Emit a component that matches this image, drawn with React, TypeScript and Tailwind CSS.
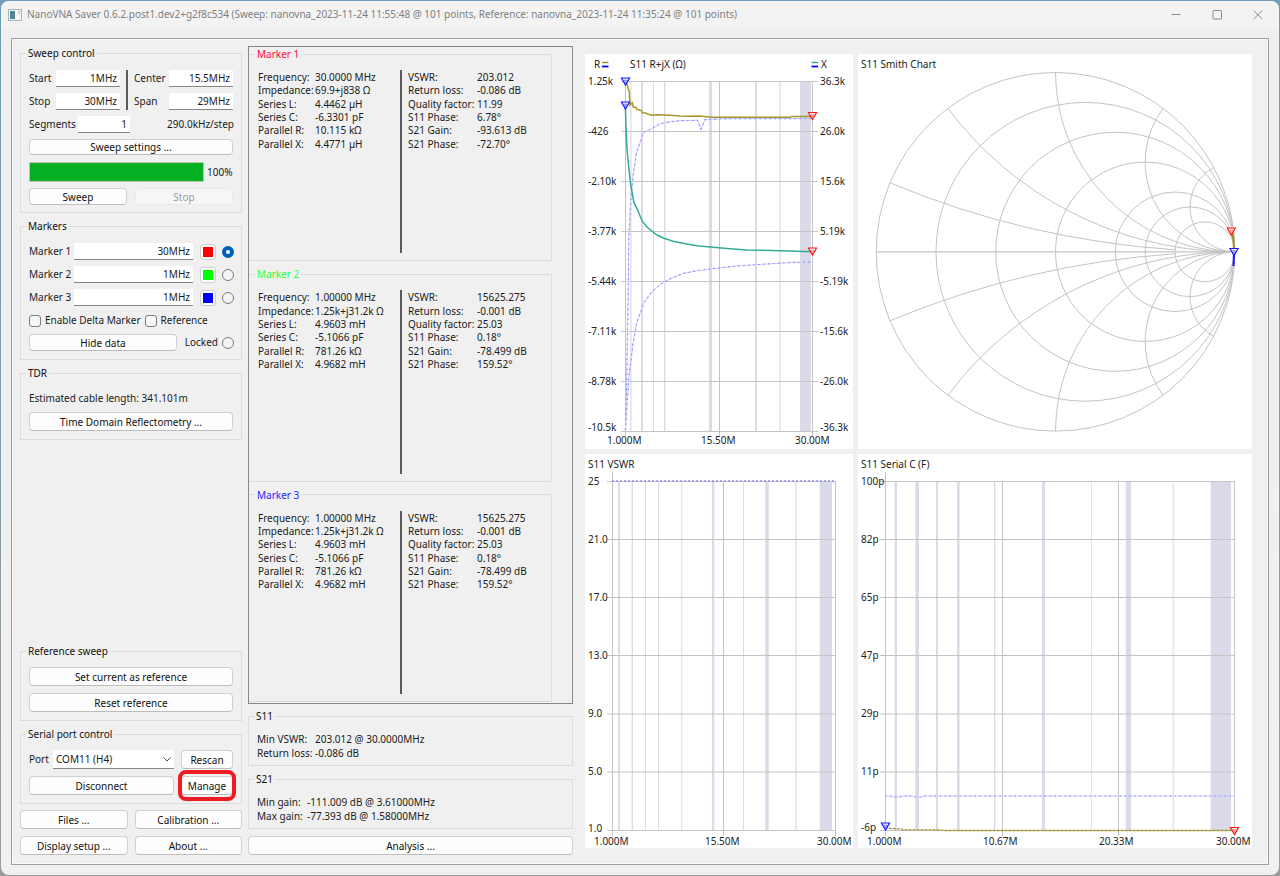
import React from "react";

type Band = [number, number];
type Pt = [number, number];

const GRID = "#c4c4c4";
const BAND = "#dadae8";

const btn =
  "flex items-center justify-center rounded-[4px] border border-[#d0d0d0] border-b-[#bdbdbd] bg-[#fdfdfd] leading-none text-[#111] whitespace-nowrap";
const field =
  "h-[17px] min-w-0 border-b border-[#868686] bg-white px-[3px] text-right text-[#1b1b1b] outline-none";

function Group({
  title,
  className = "",
  legendClass = "-ml-[3px] text-[#111]",
  children,
}: {
  title: string;
  className?: string;
  legendClass?: string;
  children: React.ReactNode;
}) {
  return (
    <fieldset className={`min-w-0 border border-[#dcdcdc] ${className}`}>
      <legend className={`h-[14px] px-[2px] leading-[14px] ${legendClass}`}>{title}</legend>
      {children}
    </fieldset>
  );
}

function LabeledField({
  label,
  value,
  labelClass,
  inputClass,
}: {
  label: string;
  value: string;
  labelClass: string;
  inputClass: string;
}) {
  const id = `f-${label.replace(/\s/g, "-").toLowerCase()}`;
  return (
    <>
      <label htmlFor={id} className={`shrink-0 ${labelClass}`}>
        {label}
      </label>
      <input id={id} defaultValue={value} className={`${field} ${inputClass}`} />
    </>
  );
}

function Radio({ label, checked = false }: { label: string; checked?: boolean }) {
  return (
    <input
      type="radio"
      name="active-marker"
      aria-label={label}
      defaultChecked={checked}
      className="size-3 shrink-0 appearance-none rounded-full border border-[#7d7d7d] bg-[#f4f4f4] checked:border-4 checked:border-[#005fb8] checked:bg-white"
    />
  );
}

function Check({ label }: { label: string }) {
  return (
    <label className="flex items-center gap-1">
      <input
        type="checkbox"
        className="size-3 shrink-0 appearance-none rounded-[3px] border border-[#7d7d7d] bg-[#f6f6f6]"
      />
      {label}
    </label>
  );
}

function MarkerRow({ name, value, swatch, checked }: { name: string; value: string; swatch: string; checked?: boolean }) {
  return (
    <div className="flex items-center">
      <LabeledField label={name} value={value} labelClass="w-[45px] whitespace-nowrap" inputClass="flex-1" />
      <button
        type="button"
        aria-label={`${name} colour`}
        className="ml-[7px] flex h-4 w-4 items-center justify-center rounded-[3px] border border-[#cfcfcf] bg-[#fdfdfd]"
      >
        <span className={`size-[10px] ${swatch}`} />
      </button>
      <span className="ml-1.5 -mr-px flex">
        <Radio label={name} checked={checked} />
      </span>
    </div>
  );
}

type DataRow = [string, string];

function DataTable({ rows, labelWidth }: { rows: DataRow[]; labelWidth: string }) {
  return (
    <table className="h-20 border-collapse">
      <tbody>
        {rows.map(([k, v]) => (
          <tr key={k}>
            <th scope="row" className={`p-0 text-left font-normal leading-[13px] whitespace-nowrap ${labelWidth}`}>
              {k}
            </th>
            <td className="p-0 leading-[13px] whitespace-nowrap">{v}</td>
          </tr>
        ))}
      </tbody>
    </table>
  );
}

function MarkerData({ title, color, left, right }: { title: string; color: string; left: DataRow[]; right: DataRow[] }) {
  return (
    <Group title={title} legendClass={`ml-[6px] ${color}`} className="mr-5 flex-1 border-l-0">
      <div className="flex h-full pt-[9px] pb-[7px] pl-[9px]">
        <div className="w-[142px] pt-px">
          <DataTable rows={left} labelWidth="w-[57px] min-w-[57px]" />
        </div>
        <div className="mr-[6px] w-[2px] bg-[#5a5a5a]" />
        <div className="pt-px">
          <DataTable rows={right} labelWidth="w-[69px] min-w-[69px]" />
        </div>
      </div>
    </Group>
  );
}

const marker1L: DataRow[] = [
  ["Frequency:", "30.0000 MHz"],
  ["Impedance:", "69.9+j838 Ω"],
  ["Series L:", "4.4462 µH"],
  ["Series C:", "-6.3301 pF"],
  ["Parallel R:", "10.115 kΩ"],
  ["Parallel X:", "4.4771 µH"],
];
const marker1R: DataRow[] = [
  ["VSWR:", "203.012"],
  ["Return loss:", "-0.086 dB"],
  ["Quality factor:", "11.99"],
  ["S11 Phase:", "6.78°"],
  ["S21 Gain:", "-93.613 dB"],
  ["S21 Phase:", "-72.70°"],
];
const marker2L: DataRow[] = [
  ["Frequency:", "1.00000 MHz"],
  ["Impedance:", "1.25k+j31.2k Ω"],
  ["Series L:", "4.9603 mH"],
  ["Series C:", "-5.1066 pF"],
  ["Parallel R:", "781.26 kΩ"],
  ["Parallel X:", "4.9682 mH"],
];
const marker2R: DataRow[] = [
  ["VSWR:", "15625.275"],
  ["Return loss:", "-0.001 dB"],
  ["Quality factor:", "25.03"],
  ["S11 Phase:", "0.18°"],
  ["S21 Gain:", "-78.499 dB"],
  ["S21 Phase:", "159.52°"],
];

/* ---------- charts ---------- */

function ChartFrame({ viewBox, label, children }: { viewBox: string; label: string; children: React.ReactNode }) {
  return (
    <div className="min-h-0 min-w-0 bg-white">
      <svg role="img" aria-label={label} viewBox={viewBox} className="block h-full w-full" fontSize="10" fill="#222">
        {children}
      </svg>
    </div>
  );
}

function Pin({ x, y, color }: { x: number; y: number; color: string }) {
  return (
    <g fill="none" stroke={color}>
      <path d={`M${x - 4} ${y - 7}h8l-4 7z`} fill="#fff" strokeWidth="1.2" />
      <path d={`M${x - 1.4} ${y - 4.9}h2.8l-1.4 2.6z`} strokeWidth="0.7" opacity="0.7" />
    </g>
  );
}

function Bands({ bands, top, bottom }: { bands: Band[]; top: number; bottom: number }) {
  return (
    <g fill={BAND}>
      {bands.map(([a, b]) => (
        <rect key={a} x={a} y={top} width={b - a} height={bottom - top} />
      ))}
    </g>
  );
}

const pts = (p: Pt[]) => p.map((q) => q.join(",")).join(" ");

const gold: Pt[] = [
  [625.5, 81], [627, 84], [629.3, 92], [630, 105], [632.3, 102.7], [633.3, 107], [636, 107.5], [637, 109.5], [641.3, 110.3],
  [642.3, 112.7], [646, 113], [648, 114.3], [652, 115.3], [657, 114.7], [670, 115.3], [680, 116], [690, 116.3], [699, 116],
  [712, 117.2], [790, 117.2], [792, 116.4], [812.5, 116.4],
];
const teal: Pt[] = [
  [625.3, 105], [626, 127], [627, 149], [629, 170], [630.7, 185], [634, 202.7], [637.3, 209.3], [642, 220.7], [646.5, 226.5],
  [651.7, 231], [657, 235], [664, 238.3], [673, 241.3], [686.7, 244], [697, 245.8], [710, 247], [730, 248.7], [746.7, 250],
  [780, 250.7], [812.7, 251.7],
];
const refUpper: Pt[] = [
  [625.5, 430], [626.7, 381], [628.3, 287], [628.7, 239], [631, 197], [633.3, 174], [636.7, 152], [641, 140], [643.3, 132.7],
  [651.7, 128.7], [660, 123.7], [670, 121.8], [680, 120.7], [697.3, 120.3], [701, 129.3], [705, 119.7], [720, 118.8], [812.7, 118.5],
];
const refLower: Pt[] = [
  [625.3, 430], [627, 405], [629.3, 373], [633.3, 341.7], [636.7, 323], [641, 310.7], [644, 302.3], [651.7, 292.3],
  [660, 284.3], [673.3, 277.3], [684, 273.3], [696.7, 270.7], [710, 269], [736.7, 266], [766.7, 264], [793, 262.4], [812.7, 262],
];

function RefTrace({ p }: { p: Pt[] }) {
  return (
    <g fill="none">
      <polyline points={pts(p)} stroke="#ccccff" strokeWidth="1" />
      <polyline points={pts(p)} stroke="#8c8cff" strokeWidth="1.2" strokeDasharray="1.5 3.5" />
    </g>
  );
}

function ImpedanceChart() {
  const rows = [81.5, 131.5, 181.5, 231.5, 281.5, 331.5, 381.5, 431.5];
  const left = ["1.25k", "-426", "-2.10k", "-3.77k", "-5.44k", "-7.11k", "-8.78k", "-10.5k"];
  const right = ["36.3k", "26.0k", "15.6k", "5.19k", "-5.19k", "-15.6k", "-26.0k", "-36.3k"];
  return (
    <ChartFrame viewBox="585 54 268 395" label="S11 R+jX">
      <Bands
        top={81}
        bottom={431}
        bands={[[630.3, 631.5], [641, 643], [653, 654], [664, 665.4], [709, 712], [755, 757], [779.3, 780.5], [800, 811]]}
      />
      <g stroke={GRID}>
        {rows.map((y) => (
          <line key={y} x1="621" x2="818" y1={y} y2={y} />
        ))}
        {[625.5, 719.5, 812.5].map((x) => (
          <line key={x} x1={x} x2={x} y1="81" y2="436" />
        ))}
      </g>
      <text x="594" y="68">R</text>
      <path d="M602 62.500h6.500" stroke="#9d8a1c" strokeWidth="1.4" />
      <path d="M602 66.500h6.500" stroke="#00f" strokeWidth="1.8" />
      <text x="630" y="68">S11 R+jX (Ω)</text>
      <path d="M811.500 62.500h6.500" stroke="#2ca28c" strokeWidth="1.4" />
      <path d="M811.500 66.500h6.500" stroke="#00f" strokeWidth="1.8" />
      <text x="821" y="68">X</text>
      {left.map((t, i) => (
        <text key={t} x="588" y={i === 7 ? 431 : 85 + i * 50}>{t}</text>
      ))}
      {right.map((t, i) => (
        <text key={t} x="820" y={i === 7 ? 431 : 85 + i * 50}>{t}</text>
      ))}
      <text x="607" y="444">1.000M</text>
      <text x="701" y="444">15.50M</text>
      <text x="795" y="444">30.00M</text>
      <RefTrace p={refUpper} />
      <RefTrace p={refLower} />
      <polyline points={pts(gold)} fill="none" stroke="#a8942c" strokeWidth="1.5" />
      <polyline points={pts(teal)} fill="none" stroke="#33aa94" strokeWidth="1.5" />
      <Pin x={625.5} y={85} color="#1414ff" />
      <Pin x={625.5} y={109} color="#1414ff" />
      <Pin x={812.5} y={119.5} color="#ff1414" />
      <Pin x={812.5} y={255} color="#ff1414" />
    </ChartFrame>
  );
}

const SMITH = { cx: 1055.5, cy: 251.8, r: 179.3 };

function smithPoint(re: number, im: number): Pt {
  const d = (re + 1) ** 2 + im ** 2;
  const gx = (re * re - 1 + im * im) / d;
  const gy = (2 * im) / d;
  return [SMITH.cx + SMITH.r * gx, SMITH.cy - SMITH.r * gy];
}

function SmithChart() {
  const { cx, cy, r } = SMITH;
  const circles = [1, 5 / 6, 2 / 3, 1 / 2, 1 / 3, 1 / 4, 1 / 6];
  const arcs: Pt[] = [[0.2, 5], [0.5, 30], [1, 60], [2, 60], [4, 80]];
  return (
    <ChartFrame viewBox="858 54 394 395" label="S11 Smith Chart">
      <g fill="none" stroke={GRID}>
        {circles.map((k) => (
          <circle key={k} cx={cx + r * (1 - k)} cy={cy} r={r * k} />
        ))}
        <line x1={cx - r} x2={cx + r} y1={cy} y2={cy} strokeWidth="1.2" />
        {arcs.map(([x, end]) =>
          [1, -1].map((s) => (
            <path
              key={`${x}${s}`}
              d={`M${smithPoint(0, s * x).join(" ")}A${r / x} ${r / x} 0 0 ${s > 0 ? 0 : 1} ${smithPoint(end, s * x).join(" ")}`}
            />
          )),
        )}
      </g>
      <text x="861" y="68">S11 Smith Chart</text>
      <path d="M1232 231l1.500 9l.5 11" fill="none" stroke="#a08c1e" strokeWidth="2" />
      <path d="M1234 252l-.5 14" fill="none" stroke="#1414ff" strokeWidth="2" />
      <Pin x={1231.3} y={235} color="#ff1414" />
      <Pin x={1234} y={255.5} color="#1414ff" />
    </ChartFrame>
  );
}

const lowerRows = [481.5, 539.5, 597.5, 655.5, 714, 772, 830.5];

function VswrChart() {
  const labels = ["25", "21.0", "17.0", "13.0", "9.0", "5.0", "1.0"];
  return (
    <ChartFrame viewBox="585 454 268 394" label="S11 VSWR">
      <Bands
        top={481}
        bottom={830}
        bands={[[618, 620], [631.6, 633], [645, 646], [658, 659], [681.3, 682.3], [712, 714.4], [743, 744], [765.3, 768.7], [795.4, 796.6], [819.7, 832]]}
      />
      <g stroke={GRID}>
        {lowerRows.map((y) => (
          <line key={y} x1="607" x2="836" y1={y} y2={y} />
        ))}
        <line x1="612.5" x2="612.5" y1="472" y2="836" />
        <line x1="723.5" x2="723.5" y1="481" y2="836" />
        <line x1="835.5" x2="835.5" y1="481" y2="836" />
        <line x1="612" x2="836" y1="481" y2="481" stroke="#8c8cff" strokeWidth="1.6" strokeDasharray="2 2" />
      </g>
      <text x="588" y="468">S11 VSWR</text>
      {labels.map((t, i) => (
        <text key={t} x="588" y={i === 6 ? 832 : 485 + i * 58}>{t}</text>
      ))}
      <text x="594" y="845">1.000M</text>
      <text x="705" y="845">15.50M</text>
      <text x="817" y="845">30.00M</text>
    </ChartFrame>
  );
}

function SerialCChart() {
  const labels = ["100p", "82p", "65p", "47p", "29p", "11p", "-6p"];
  const ref: Pt[] = [[885, 796], [890, 796], [894, 797], [899, 797], [903, 796], [912, 796], [916, 797], [921, 797], [925, 796], [1235, 796]];
  return (
    <ChartFrame viewBox="858 454 394 394" label="S11 Serial C">
      <Bands
        top={481}
        bottom={830}
        bands={[[894.7, 897], [915.4, 919], [936, 938], [957, 959.6], [994, 995.3], [1042, 1045], [1091.3, 1092], [1125.7, 1131], [1172.7, 1173.7], [1210.6, 1231]]}
      />
      <g stroke={GRID}>
        {lowerRows.map((y) => (
          <line key={y} x1="880" x2="1235" y1={y} y2={y} />
        ))}
        <line x1="885.5" x2="885.5" y1="472" y2="836" />
        <line x1="1002.5" x2="1002.5" y1="481" y2="836" />
        <line x1="1118.5" x2="1118.5" y1="481" y2="836" />
        <line x1="1234.5" x2="1234.5" y1="481" y2="836" />
      </g>
      <text x="861" y="468">S11 Serial C (F)</text>
      {labels.map((t, i) => (
        <text key={t} x="861" y={i === 6 ? 831 : 485 + i * 58}>{t}</text>
      ))}
      <text x="867" y="845">1.000M</text>
      <text x="983" y="845">10.67M</text>
      <text x="1099" y="845">20.33M</text>
      <text x="1216" y="845">30.00M</text>
      <RefTrace p={ref} />
      <polyline
        points="885,827 890,828.5 901,829 903,829.8 940,830 945,830.5 1235,830.5"
        fill="none"
        stroke="#a8942c"
        strokeWidth="1.3"
        strokeDasharray="3 1"
      />
      <Pin x={885.5} y={830} color="#1414ff" />
      <Pin x={1234.5} y={834.5} color="#ff1414" />
    </ChartFrame>
  );
}

/* ---------- panels ---------- */

function ControlColumn() {
  return (
    <div className="flex w-[222px] shrink-0 flex-col">
      <Group title="Sweep control" className="px-2 pb-[7px]">
        <div className="mt-[10px] flex gap-[6px]">
          <div className="flex w-[91px] flex-col gap-1.5">
            <div className="flex items-center">
              <LabeledField label="Start" value="1MHz" labelClass="w-[27px]" inputClass="flex-1" />
            </div>
            <div className="flex items-center">
              <LabeledField label="Stop" value="30MHz" labelClass="w-[27px]" inputClass="flex-1" />
            </div>
          </div>
          <div className="w-[2px] bg-[#5a5a5a]" />
          <div className="flex min-w-0 flex-1 flex-col gap-1.5">
            <div className="flex items-center">
              <LabeledField label="Center" value="15.5MHz" labelClass="w-[35px]" inputClass="flex-1" />
            </div>
            <div className="flex items-center">
              <LabeledField label="Span" value="29MHz" labelClass="w-[35px]" inputClass="flex-1" />
            </div>
          </div>
        </div>
        <div className="mt-1.5 flex items-center">
          <LabeledField label="Segments" value="1" labelClass="w-[49px]" inputClass="w-[52px]" />
          <span className="-mr-px ml-auto">290.0kHz/step</span>
        </div>
        <button type="button" className={`${btn} mt-1.5 h-[16px] w-full`}>Sweep settings ...</button>
        <div className="mt-[7px] flex items-center gap-[3px]">
          <div role="progressbar" aria-valuenow={100} className="h-5 w-[175px] border border-[#b8c4b8] bg-[#06b025]" />
          <span>100%</span>
        </div>
        <div className="mt-[6px] grid grid-cols-2 gap-2">
          <button type="button" className={`${btn} h-[17px]`}>Sweep</button>
          <button type="button" disabled className="flex h-[17px] items-center justify-center rounded-[4px] border border-[#eaeaea] bg-[#f6f6f6] leading-none text-[#9a9a9a]">
            Stop
          </button>
        </div>
      </Group>

      <Group title="Markers" className="mt-1.5 px-2 pb-2">
        <div className="mt-[10px] flex flex-col gap-1.5">
          <MarkerRow name="Marker 1" value="30MHz" swatch="bg-[#ff0000]" checked />
          <MarkerRow name="Marker 2" value="1MHz" swatch="bg-[#00ff00]" />
          <MarkerRow name="Marker 3" value="1MHz" swatch="bg-[#0000ff]" />
        </div>
        <div className="mt-[7px] flex gap-1">
          <Check label="Enable Delta Marker" />
          <Check label="Reference" />
        </div>
        <div className="mt-[6px] flex items-center">
          <button type="button" className={`${btn} h-[17px] w-[148px]`}>Hide data</button>
          <label className="-mr-px ml-auto flex items-center gap-1">
            Locked
            <Radio label="Locked" />
          </label>
        </div>
      </Group>

      <Group title="TDR" className="mt-1.5 px-2 pb-2">
        <div className="mt-[11px] leading-[14px]">Estimated cable length: 341.101m</div>
        <button type="button" className={`${btn} mt-[7px] h-[19px] w-full`}>Time Domain Reflectometry ...</button>
      </Group>

      <Group title="Reference sweep" className="mt-auto px-2 pb-2">
        <button type="button" className={`${btn} mt-[9px] h-[19px] w-full`}>Set current as reference</button>
        <button type="button" className={`${btn} mt-[7px] h-[19px] w-full`}>Reset reference</button>
      </Group>

      <Group title="Serial port control" className="mt-1.5 px-2 pb-2">
        <div className="mt-[9px] flex gap-[7px]">
          <div className="flex flex-1 items-center">
            <label htmlFor="port" className="w-6">Port</label>
            <div className="relative flex-1">
              <select id="port" className="h-[19px] w-full appearance-none border-b border-[#868686] bg-white pl-[3px] text-[#1b1b1b] outline-none">
                <option>COM11 (H4)</option>
              </select>
              <svg viewBox="0 0 8 5" className="pointer-events-none absolute top-[7px] right-[3px] h-[5px] w-2" fill="none" stroke="#555">
                <path d="M.5.5 4 4 7.500.5" />
              </svg>
            </div>
          </div>
          <button type="button" className={`${btn} h-[19px] w-[52px]`}>Rescan</button>
        </div>
        <div className="mt-[7px] flex gap-[7px]">
          <button type="button" className={`${btn} h-[19px] flex-1`}>Disconnect</button>
          <div className="relative">
            <button type="button" className={`${btn} h-[19px] w-[52px]`}>Manage</button>
            <div className="pointer-events-none absolute -inset-x-[3px] -inset-y-[6px] rounded-[8px] border-4 border-[#ed1c24]" />
          </div>
        </div>
      </Group>

      <div className="mt-[6px] grid grid-cols-2 gap-[7px]">
        <button type="button" className={`${btn} h-[19px]`}>Files ...</button>
        <button type="button" className={`${btn} h-[19px]`}>Calibration ...</button>
        <button type="button" className={`${btn} h-[19px]`}>Display setup ...</button>
        <button type="button" className={`${btn} h-[19px]`}>About ...</button>
      </div>
    </div>
  );
}

function Summary({ title, rows, gap, className }: { title: string; rows: DataRow[]; gap: string; className: string }) {
  return (
    <Group title={title} className={`px-2 ${className}`}>
      <table className="mt-[9px] mb-[5px] border-collapse">
        <tbody>
          {rows.map(([k, v]) => (
            <tr key={k}>
              <th scope="row" className={`p-0 text-left font-normal leading-[14px] whitespace-nowrap ${gap}`}>{k}</th>
              <td className="p-0 leading-[14px] whitespace-nowrap">{v}</td>
            </tr>
          ))}
        </tbody>
      </table>
    </Group>
  );
}

function DataColumn() {
  return (
    <div className="ml-1.5 flex w-[325px] shrink-0 flex-col">
      <div className="flex flex-1 flex-col gap-[6px] border border-[#828790] pb-px">
        <MarkerData title="Marker 1" color="text-[#ff0a3c]" left={marker1L} right={marker1R} />
        <MarkerData title="Marker 2" color="text-[#1eff3c]" left={marker2L} right={marker2R} />
        <MarkerData title="Marker 3" color="text-[#1e1eff]" left={marker2L} right={marker2R} />
      </div>
      <Summary
        title="S11"
        className="mt-[5px]"
        gap="w-[58px] min-w-[58px]"
        rows={[["Min VSWR:", "203.012 @ 30.0000MHz"], ["Return loss:", "-0.086 dB"]]}
      />
      <Summary
        title="S21"
        className="mt-[6px]"
        gap="w-[50px] min-w-[50px]"
        rows={[["Min gain:", "-111.009 dB @ 3.61000MHz"], ["Max gain:", "-77.393 dB @ 1.58000MHz"]]}
      />
      <button type="button" className={`${btn} mt-[7px] h-[19px] w-full`}>Analysis ...</button>
    </div>
  );
}

export default function App() {
  return (
    <div className="flex min-h-screen bg-linear-to-b from-[#6f9cb8] to-[#9a9a9a] p-px font-['Noto_Sans',sans-serif] text-[10px] text-[#1b1b1b]">
      <div className="flex min-w-0 flex-1 flex-col rounded-lg bg-[#f0f0f0]">
        <header className="flex h-[27px] shrink-0 items-center rounded-t-lg bg-[#f3f3f3] pr-[16px] pl-[7px] text-[#808080]">
          <svg viewBox="0 0 14 12" className="mr-[5px] h-3 w-[14px]">
            <rect x=".5" y=".5" width="13" height="11" fill="#f8f8f8" stroke="#a9b3b8" />
            <rect x="2" y="2" width="5" height="8" fill="#3f8f8a" />
            <rect x="4" y="3" width="3" height="6" fill="#5f7f96" />
            <path d="M10 3h2M11 5h1" stroke="#7fa5b5" />
          </svg>
          <h1 className="flex-1 whitespace-nowrap">
            NanoVNA Saver 0.6.2.post1.dev2+g2f8c534 (Sweep: nanovna_2023-11-24 11:55:48 @ 101 points, Reference: nanovna_2023-11-24 11:35:24 @ 101 points)
          </h1>
          <div className="flex gap-[31px]">
            <button type="button" aria-label="Minimize">
              <svg viewBox="0 0 10 10" className="size-[10px]" stroke="#8a8a8a"><path d="M.5 4.500h9" /></svg>
            </button>
            <button type="button" aria-label="Maximize">
              <svg viewBox="0 0 10 10" className="size-[10px]" stroke="#8a8a8a" fill="none"><rect x="1" y=".5" width="8.500" height="8.500" rx=".7" /></svg>
            </button>
            <button type="button" aria-label="Close">
              <svg viewBox="0 0 10 10" className="size-[10px]" stroke="#8a8a8a"><path d="M.7.5l8.600 8.600M9.300.5.7 9.100" /></svg>
            </button>
          </div>
        </header>
        <main className="mx-[10px] mt-[10px] mb-[10px] flex flex-1 border border-[#9a9ea6] pt-[7px] pr-4 pb-[9px] pl-2 shadow-[inset_0_0_0_1px_#fafafa]">
          <ControlColumn />
          <DataColumn />
          <div className="mt-2 mb-[7px] ml-3 grid min-w-0 flex-1 grid-cols-[268fr_394fr] grid-rows-[395fr_394fr] gap-[5px]">
            <ImpedanceChart />
            <SmithChart />
            <VswrChart />
            <SerialCChart />
          </div>
        </main>
      </div>
    </div>
  );
}
